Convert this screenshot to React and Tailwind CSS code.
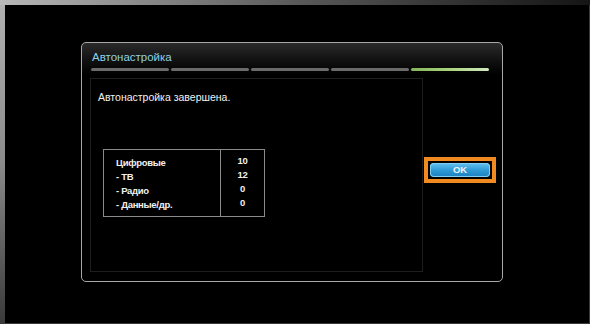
import React from 'react';

const rows = [
  { label: 'Цифровые', value: '10' },
  { label: '- ТВ', value: '12' },
  { label: '- Радио', value: '0' },
  { label: '- Данные/др.', value: '0' },
];

const AutoTuneDone = () => {
  return (
    <div className="w-[590px] h-[324px] bg-black flex flex-col overflow-hidden font-['Liberation_Sans',Arial,sans-serif]">
      {/* TV bezel top */}
      <div className="h-[5px] bg-gradient-to-r from-[#b8b8b8] via-[#5a5a5a] to-[#151515]" />
      <div className="flex flex-1">
        {/* bezel left */}
        <div className="w-[5px] bg-gradient-to-b from-[#b0b0b0] via-[#8a8a8a] to-[#3a3a3a]" />
        <div className="flex-1 border-r border-b border-[#3a3a3a] pt-[37px] pl-[76px]">
          <div className="w-[422px] h-[240px] rounded-[5px] border border-[#a8a8a8] bg-[linear-gradient(to_bottom,#2a2a2a_0px,#101010_18px,#000_32px)] flex flex-col">
            <div className="pl-[10px] pt-[7px] text-[11.5px] leading-[14px] text-[#8fd0e4]">Автонастройка</div>
            <div className="flex gap-[2px] pl-[9px] mt-[4px]">
              <div className="w-[78px] h-[3px] rounded-full bg-[#6a6a6a]" />
              <div className="w-[78px] h-[3px] rounded-full bg-[#6a6a6a]" />
              <div className="w-[78px] h-[3px] rounded-full bg-[#6a6a6a]" />
              <div className="w-[78px] h-[3px] rounded-full bg-[#6a6a6a]" />
              <div className="w-[78px] h-[3px] rounded-full bg-gradient-to-r from-[#86b45a] via-[#a9d47c] to-[#d2e8c0]" />
            </div>
            <div className="flex mt-[7px] pl-[8px]">
              <div className="w-[333px] h-[194px] border border-[#1e1e1e] pl-[7px] pt-[12px]">
                <div className="text-[10.5px] leading-[13px] text-[#f2f2f2]">Автонастройка завершена.</div>
                <div className="ml-[5px] mt-[45px] w-[162px] h-[68px] border border-[#8a8a8a] flex text-[9.5px] font-bold tracking-[-0.3px] text-[#f0f0f0]">
                  <div className="w-[117px] border-r border-[#8a8a8a] pl-[12px] pt-[6px]">
                    {rows.map((r) => (
                      <div key={r.label} className="h-[14px] leading-[14px]">{r.label}</div>
                    ))}
                  </div>
                  <div className="flex-1 pt-[4px] text-center">
                    {rows.map((r) => (
                      <div key={r.label} className="h-[14px] leading-[14px]">{r.value}</div>
                    ))}
                  </div>
                </div>
              </div>
              <div className="ml-[1px] mt-[79px]">
                <div className="w-[72px] h-[26px] border-[4px] border-[#f28a22] p-[2px] flex">
                  <div className="flex-1 rounded-[4px] bg-gradient-to-b from-[#63c2ee] via-[#2f9bd6] to-[#1a7fbf] flex items-center justify-center text-[9.5px] font-bold text-[#eef8ff] shadow-[inset_0_0_0_1px_#7fd0f4]">
                    OK
                  </div>
                </div>
              </div>
            </div>
          </div>
        </div>
      </div>
    </div>
  );
};

export default AutoTuneDone;
